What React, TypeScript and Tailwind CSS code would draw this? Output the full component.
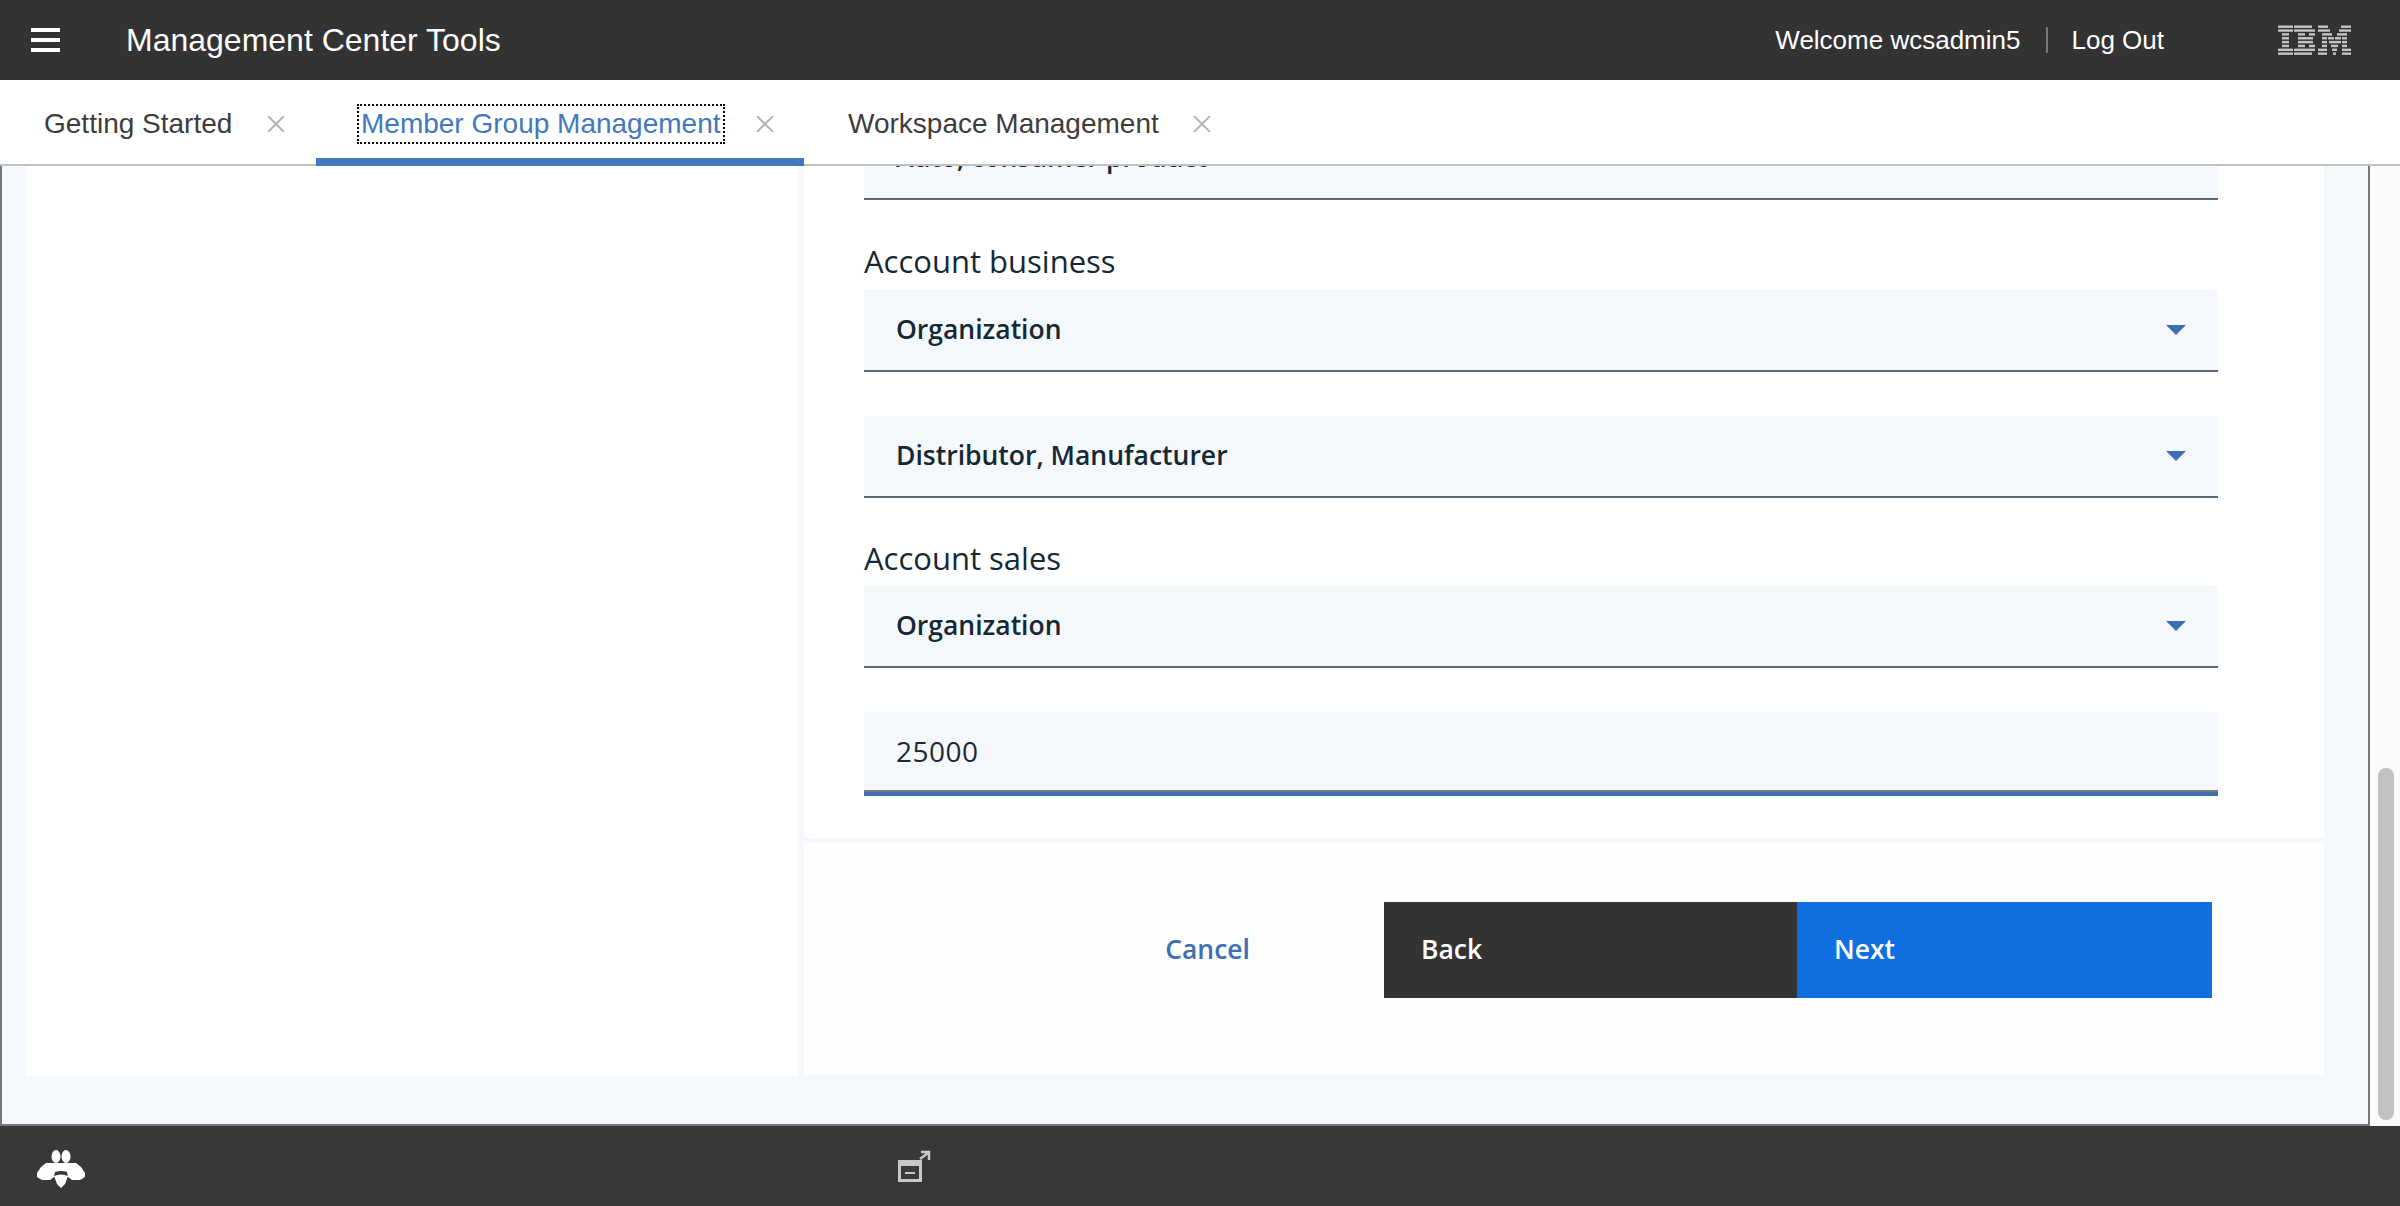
const plex = "font-['Open_Sans',sans-serif]";
const helv = "font-['Liberation_Sans',Arial,sans-serif]";

const Hamburger = () => (
  <div className="flex w-[29px] flex-col gap-[6px]">
    <div className="h-1 bg-white" />
    <div className="h-1 bg-white" />
    <div className="h-1 bg-white" />
  </div>
);

// [x, width] bars for each of the eight stripes of the logo
const ibmRows: number[][][] = [
  [[0, 15], [16, 18], [40, 10], [63, 10]],
  [[0, 15], [16, 21], [40, 12], [61, 12]],
  [[4, 7], [20, 7], [31, 6], [44, 10], [59, 10]],
  [[4, 7], [20, 15], [44, 5], [50, 6], [57, 6], [64, 5]],
  [[4, 7], [20, 15], [44, 5], [51, 12], [64, 5]],
  [[4, 7], [20, 7], [31, 6], [44, 5], [53, 7], [64, 5]],
  [[0, 15], [16, 21], [40, 9], [54, 5], [64, 9]],
  [[0, 15], [16, 18], [40, 9], [55, 3], [64, 9]],
];

const IbmLogo = () => (
  <svg width="73" height="30" viewBox="0 0 73 30" fill="#c4c4c4">
    {ibmRows.map((row, i) =>
      row.map(([x, w]) => <rect key={`${i}-${x}`} x={x} y={i * 3.85 + 0.5} width={w} height="2.4" />),
    )}
  </svg>
);

const BeeIcon = () => (
  <svg width="48" height="38" viewBox="0 0 48 38" fill="white">
    <ellipse cx="19" cy="6.5" rx="4.5" ry="6.5" />
    <ellipse cx="29" cy="6.5" rx="4.5" ry="6.5" />
    <path d="M9 13H39L44 17L48 23V27L43 30H35L31 27L30 22Q24 20 18 22L17 27L13 30H5L0 27V23L4 17Z" />
    <path d="M17 26Q24 23 31 26L28 34L24 38L20 34Z" />
  </svg>
);

const DetachIcon = () => (
  <svg width="36" height="32" viewBox="0 0 36 32" fill="none">
    <path d="M2 10h24v22H2z" fill="#c8c8c8" />
    <rect x="5" y="16" width="18" height="13" fill="#3a3a3a" />
    <rect x="9" y="22" width="10" height="2" fill="#c8c8c8" />
    <path d="M24 9l8-6M25 2h8v8" stroke="#c8c8c8" strokeWidth="2.5" />
  </svg>
);

const CloseX = () => (
  <svg width="18" height="16" viewBox="0 0 18 16" stroke="#b4b4b4" strokeWidth="2">
    <path d="M1 0l16 16M17 0L1 16" />
  </svg>
);

const Caret = () => (
  <svg width="20" height="10" viewBox="0 0 20 10" fill="#3d70b2">
    <path d="M0 0h20l-10 10z" />
  </svg>
);

const Select = ({ value }: { value: string }) => (
  <div className="flex h-[82px] items-center justify-between border-b-2 border-[#5a6872] bg-[#f4f7fb] pl-[32px] pr-[32px]">
    <span className="text-[26.5px] font-semibold text-[#152935]">{value}</span>
    <Caret />
  </div>
);

const App = () => {
  return (
    <div className={`flex h-[1206px] w-[2400px] flex-col overflow-hidden bg-white ${plex}`}>
      {/* Header */}
      <header className={`flex h-20 shrink-0 items-center bg-[#333333] text-white ${helv}`}>
        <div className="ml-[31px]"><Hamburger /></div>
        <span className="ml-[66px] text-[32px]">Management Center Tools</span>
        <div className="ml-auto flex items-center text-[26px]">
          <span>Welcome wcsadmin5</span>
          <div className="ml-[26px] mr-[23px] h-[26px] w-[2px] bg-[#777]" />
          <span>Log Out</span>
        </div>
        <div className="ml-[114px] mr-[49px]"><IbmLogo /></div>
      </header>

      {/* Tabs */}
      <nav className={`flex h-[86px] shrink-0 border-b-2 border-[#c0c0c0] text-[28px] leading-[36px] text-[#3d3d3d] ${helv}`}>
        <div className="w-[316px] pl-[44px] pt-6">
          <div className="flex h-10 items-center">
            <span>Getting Started</span>
            <span className="ml-[35px]"><CloseX /></span>
          </div>
        </div>
        <div className="-mb-[2px] w-[488px] border-b-[8px] border-[#4178be] pl-[41px] pt-6 text-[#4178be]">
          <div className="flex h-10 items-center">
            <span className="border-2 border-dotted border-black px-[2px]">Member Group Management</span>
            <span className="ml-[31px]"><CloseX /></span>
          </div>
        </div>
        <div className="pl-[44px] pt-6">
          <div className="flex h-10 items-center">
            <span>Workspace Management</span>
            <span className="ml-[34px]"><CloseX /></span>
          </div>
        </div>
      </nav>

      {/* Main */}
      <div className="flex min-h-0 flex-1">
        <main className="flex min-h-0 flex-1 overflow-hidden border-b-2 border-l-2 border-r-2 border-[#777] bg-[#f4f7fb] pb-12 pl-6 pr-11">
          <div className="w-[772px] self-stretch bg-white" />
          <div className="mb-[2px] ml-[6px] flex min-w-0 flex-1 flex-col justify-end bg-white">
            <div className="flex flex-col pb-[42px] pl-[60px] pr-[106px]">
              <div className="flex h-[82px] shrink-0 items-center border-b-2 border-[#5a6872] bg-[#f4f7fb] pl-[32px]">
                <span className="text-[26.5px] font-semibold text-[#152935]">Auto, consumer product</span>
              </div>
              <label className="mt-[42px] h-12 text-[31px] leading-[38px] text-[#152935]">Account business</label>
              <Select value="Organization" />
              <div className="h-[44px]" />
              <Select value="Distributor, Manufacturer" />
              <label className="mt-[40px] h-12 text-[31px] leading-[41px] text-[#152935]">Account sales</label>
              <Select value="Organization" />
              <div className="h-[44px]" />
              <div className="border-b-4 border-[#3d70b2]">
                <div className="flex h-[80px] items-center border-b-2 border-[#777] bg-[#f4f7fb] pl-[32px] text-[28px] tracking-[0.5px] text-[#1f2a33]">
                  25000
                </div>
              </div>
            </div>
            <div className="h-1 shrink-0 bg-[#f4f7fb]" />
            <div className="flex h-[232px] shrink-0 items-start justify-end bg-[#fefefe] pr-[112px] pt-[60px]">
              <span className="mr-[134px] mt-[28px] text-[26.5px] font-semibold text-[#3d70b2]">Cancel</span>
              <button className="flex h-[96px] w-[413px] items-center bg-[#333333] pl-[37px] text-[26.5px] font-semibold text-white">Back</button>
              <button className="flex h-[96px] w-[415px] items-center bg-[#0f6fe0] pl-[37px] text-[26.5px] font-semibold text-white">Next</button>
            </div>
          </div>
        </main>
        <div className="flex w-[30px] shrink-0 items-end bg-[#fafafa] pb-[6px] pl-[8px]">
          <div className="h-[352px] w-4 rounded-lg bg-[#c1c1c1]" />
        </div>
      </div>

      {/* Footer */}
      <footer className="flex h-20 shrink-0 items-center bg-[#383838]">
        <div className="ml-[37px] mt-[6px]"><BeeIcon /></div>
        <div className="ml-[811px]"><DetachIcon /></div>
      </footer>
    </div>
  );
};

export default App;
